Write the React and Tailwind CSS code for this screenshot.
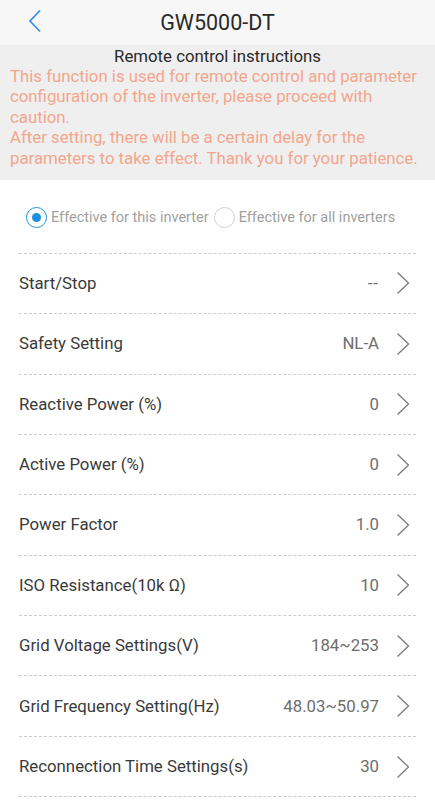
import React, { useState } from 'react';

const rows = [
  { label: 'Start/Stop', value: '--' },
  { label: 'Safety Setting', value: 'NL-A' },
  { label: 'Reactive Power (%)', value: '0' },
  { label: 'Active Power (%)', value: '0' },
  { label: 'Power Factor', value: '1.0' },
  { label: 'ISO Resistance(10k Ω)', value: '10' },
  { label: 'Grid Voltage Settings(V)', value: '184~253' },
  { label: 'Grid Frequency Setting(Hz)', value: '48.03~50.97' },
  { label: 'Reconnection Time Settings(s)', value: '30' },
];

const Chevron = () => (
  <svg width="14" height="24" viewBox="0 0 14 24" fill="none" className="ml-[17px] shrink-0">
    <path d="M1.5 1.5 L12.5 12 L1.5 22.5" stroke="#7a7a7a" strokeWidth="1.3" />
  </svg>
);

const Radio = ({ checked, onClick, label }) => (
  <button type="button" onClick={onClick} className="flex items-center gap-[4px]">
    <span
      className={
        checked
          ? 'w-[21px] h-[21px] rounded-full border border-[#1a90e0] flex items-center justify-center'
          : 'w-[21px] h-[21px] rounded-full border border-[#d0d0d0]'
      }
    >
      {checked && <span className="w-[9px] h-[9px] rounded-full bg-[#1a90e0]" />}
    </span>
    <span className="text-[14.5px] text-[#9f9f9f]">{label}</span>
  </button>
);

const App = () => {
  const [scope, setScope] = useState('this');

  return (
    <main className="w-[435px] h-[800px] overflow-hidden bg-white font-['Roboto','Liberation_Sans',sans-serif]">
      {/* Header */}
      <div className="h-[45px] bg-[#f7f7f7] flex items-center relative">
        <svg width="14" height="24" viewBox="0 0 14 24" fill="none" className="absolute left-[28px] top-[9px]">
          <path d="M12 1.5 L2 12 L12 22.5" stroke="#3b8fe0" strokeWidth="1.8" />
        </svg>
        <h1 className="w-full text-center text-[21.5px] text-[#2a2a2a] pt-[1px]">GW5000-DT</h1>
      </div>

      {/* Instructions */}
      <div className="bg-[#efefef] h-[135px] px-[10px]">
        <p className="text-center text-[16.8px] text-[#2a2a2a] leading-[20px] pt-[1px]">Remote control instructions</p>
        <p className="text-[16.8px] leading-[20.4px] text-[#f3a68c]">
          This function is used for remote control and parameter configuration of the inverter, please proceed with caution.
          <br />
          After setting, there will be a certain delay for the parameters to take effect. Thank you for your patience.
        </p>
      </div>

      {/* Scope */}
      <div className="flex items-center gap-[5px] pl-[26px] pt-[27px] pb-[24px]">
        <Radio checked={scope === 'this'} onClick={() => setScope('this')} label="Effective for this inverter" />
        <Radio checked={scope === 'all'} onClick={() => setScope('all')} label="Effective for all inverters" />
      </div>

      {/* Parameter list */}
      <div className="mx-[19px] border-t border-dashed border-[#cccccc]">
        {rows.map((row) => (
          <div
            key={row.label}
            className="h-[60.4px] flex items-center border-b border-dashed border-[#cccccc] pr-[6px]"
          >
            <span className="flex-1 text-[16.8px] text-[#3a3a3a]">{row.label}</span>
            <span className={row.value === '--' ? 'text-[16.8px] text-[#6e6e6e] tracking-[1px]' : 'text-[16.8px] text-[#6e6e6e]'}>
              {row.value}
            </span>
            <Chevron />
          </div>
        ))}
      </div>
    </main>
  );
};

export default App;
